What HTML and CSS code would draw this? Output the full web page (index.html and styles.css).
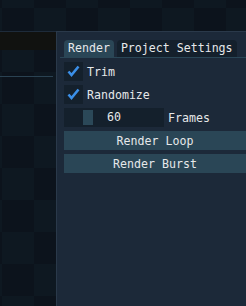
FILE: index.html
```html
<!DOCTYPE html>
<html lang="en">

<head>
    <meta charset="UTF-8" />
    <meta name="viewport" content="width=device-width, initial-scale=1.0" />
    <title>Render</title>
    <link rel="stylesheet" href="styles.css">
</head>

<body>

    <div class="top-gap"></div>

    <div class="workspace">
        <div class="side-window">
            <div class="side-title"></div>
            <div class="side-sep"></div>
        </div>

        <div class="panel">
            <div class="tabbar">
                <div class="tab active">Render</div>
                <div class="tab">Project Settings</div>
            </div>

            <div class="items">
                <label class="check-row">
                    <span class="checkbox">
                        <svg width="19" height="19" viewBox="0 0 19 19">
                            <path d="M4.5 9.5 L7.5 13 L14.5 4.5" fill="none" stroke="#3b8fe8" stroke-width="2.6" />
                        </svg>
                    </span>
                    Trim
                </label>
                <label class="check-row">
                    <span class="checkbox">
                        <svg width="19" height="19" viewBox="0 0 19 19">
                            <path d="M4.5 9.5 L7.5 13 L14.5 4.5" fill="none" stroke="#3b8fe8" stroke-width="2.6" />
                        </svg>
                    </span>
                    Randomize
                </label>

                <div class="drag-row">
                    <div class="drag">
                        <span class="grab"></span>
                        60
                    </div>
                    <span>Frames</span>
                </div>

                <button class="btn">Render Loop</button>
                <button class="btn">Render Burst</button>
            </div>
        </div>
    </div>

</body>

</html>
```

FILE: styles.css
```css
body {
    margin: 0;
    height: 306px;
    overflow: hidden;
    display: flex;
    flex-direction: column;
    font-family: "DejaVu Sans Mono", "Liberation Mono", monospace;
    font-size: 11.6px;
    color: #e6e8ea;
    background-color: #0c131c;
    background-image: conic-gradient(#0e1821 25%, transparent 0 50%, #0e1821 0 75%, transparent 0);
    background-size: 64px 64px;
    background-position: 2px 8px;
}

.top-gap {
    height: 31px;
    flex-shrink: 0;
}

.workspace {
    flex: 1;
    display: flex;
}

/* left window */
.side-window {
    width: 56px;
    flex-shrink: 0;
    border-top: 1px solid #1e2b3a;
}

.side-title {
    height: 18px;
    background-color: #111210;
}

.side-sep {
    width: 53px;
    height: 1px;
    margin-top: 26px;
    background-color: #2a4252;
}

/* right panel */
.panel {
    flex: 1;
    background-color: #1c2939;
    border-top: 1px solid #2a394a;
    border-left: 1px solid #2a394a;
    padding: 8px 0 0 3px;
}

.tabbar {
    display: flex;
    gap: 3px;
    padding-left: 4px;
    border-bottom: 1px solid #2a4656;
}

.tab {
    height: 17px;
    line-height: 17px;
    padding: 0 4px;
    border-radius: 4px 4px 0 0;
    background-color: #14202c;
    white-space: nowrap;
}

.tab.active {
    background-color: #2a4656;
}

.items {
    display: flex;
    flex-direction: column;
    gap: 4px;
    margin-top: 4px;
    padding-left: 4px;
}

.check-row {
    display: flex;
    align-items: center;
    gap: 4px;
    height: 19px;
}

.checkbox {
    width: 19px;
    height: 19px;
    background-color: #14202c;
    display: flex;
}

.drag-row {
    display: flex;
    align-items: center;
    gap: 4px;
    height: 19px;
}

.drag {
    position: relative;
    width: 100px;
    height: 19px;
    line-height: 19px;
    text-align: center;
    background-color: #14202c;
}

.grab {
    position: absolute;
    left: 19px;
    top: 2px;
    width: 10px;
    height: 15px;
    background-color: #2b4858;
}

.btn {
    height: 19px;
    padding: 0;
    border: none;
    background-color: #2a4656;
    color: #e6e8ea;
    font: inherit;
    text-align: center;
}
```
